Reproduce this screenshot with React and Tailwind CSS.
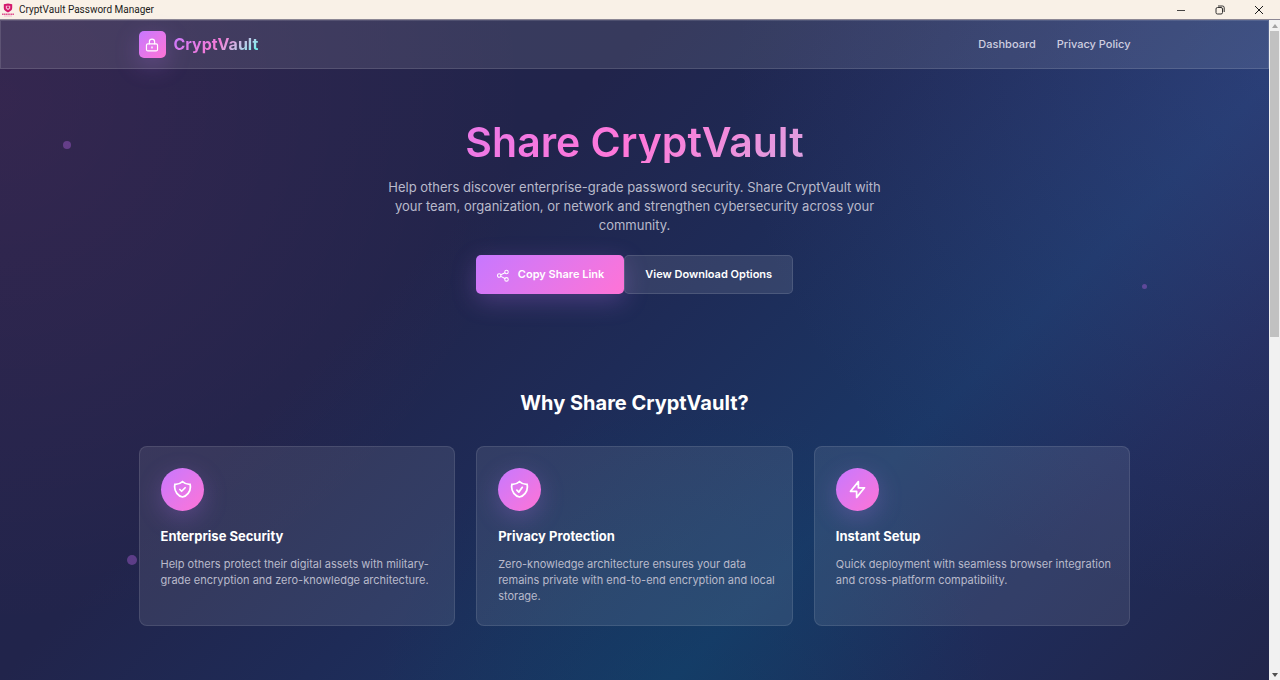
import React from "react";

const GLOW = "shadow-[0_7px_24px_rgba(199,119,255,0.25)]";

function Icon({ className, strokeWidth = 2, children }) {
  return (
    <svg
      viewBox="0 0 24 24"
      fill="none"
      stroke="currentColor"
      strokeWidth={strokeWidth}
      strokeLinecap="round"
      strokeLinejoin="round"
      className={className}
      aria-hidden="true"
    >
      {children}
    </svg>
  );
}

function LockIcon() {
  return (
    <Icon className="size-[14px]" strokeWidth={2}>
      <rect x="2.500" y="10" width="19" height="12" rx="2.5" />
      <path d="M7.5 10V6.500a4.5 4.5 0 0 1 9 0V10" />
      <path d="M12 15.5v1.500" strokeWidth={2.4} />
    </Icon>
  );
}

function ShareIcon() {
  return (
    <Icon className="size-[14px]" strokeWidth={1.8}>
      <circle cx="5.5" cy="13" r="3" />
      <circle cx="18" cy="7" r="3" />
      <circle cx="18" cy="19.500" r="3" />
      <path d="M8.3 11.7l7-3.4M8.3 14.4l7 3.7" />
    </Icon>
  );
}

function ShieldIcon({ check }) {
  return (
    <Icon className="size-[21px]">
      <path d="M12 2.9A12 12 0 0 1 3.4 6 12 12 0 0 0 3 9c0 5.6 3.8 10.3 9 11.6 5.2-1.3 9-6 9-11.6 0-1-.1-2-.4-3A12 12 0 0 1 12 2.9Z" />
      <path d={check} />
    </Icon>
  );
}

function BoltIcon() {
  return (
    <Icon className="size-[21px]">
      <path d="M13 10V3L4 14h7v7l9-11h-7z" />
    </Icon>
  );
}

const FEATURES = [
  {
    title: "Enterprise Security",
    text: "Help others protect their digital assets with military-grade encryption and zero-knowledge architecture.",
    icon: <ShieldIcon check="M9 12l2 2 4-4" />,
  },
  {
    title: "Privacy Protection",
    text: "Zero-knowledge architecture ensures your data remains private with end-to-end encryption and local storage.",
    icon: <ShieldIcon check="M9 12.7l2.2 2.300 4-5.500" />,
  },
  {
    title: "Instant Setup",
    text: "Quick deployment with seamless browser integration and cross-platform compatibility.",
    icon: <BoltIcon />,
  },
];

function TitleBar() {
  return (
    <div className="flex h-5 items-center justify-between border-b border-[#8c8794] bg-[#f9f1e7] text-[#1b1b1b]">
      <div className="flex items-center gap-1 pl-px">
        <svg viewBox="0 0 14 14" className="size-[14px]" aria-hidden="true">
          <path d="M2.8 1.200 7 .4l4.200.8v3.800c0 2-1.700 3.300-4.200 4.400-2.500-1.100-4.200-2.400-4.200-4.400z" fill="#d3176b" />
          <path d="M4.800 2.800h4.400v2.600L7 7.200 4.800 5.400z" fill="#f3b5ce" />
          <path d="M6 3.600h2v1.700H6z" fill="#d3176b" />
          <path d="M1 11.200h12" stroke="#e0508f" strokeWidth="1.600" strokeDasharray="1.400 0.400" />
          <path d="M3 13h8" stroke="#f0b4cc" strokeWidth="0.800" />
        </svg>
        <span className="font-[Roboto,sans-serif] text-[10px] leading-4">CryptVault Password Manager</span>
      </div>
      <div className="flex items-center pr-0.5">
        <button type="button" aria-label="Minimize" className="flex w-[39px] justify-center">
          <svg viewBox="0 0 10 10" className="size-[10px]" fill="none" stroke="currentColor" strokeWidth="0.800">
            <path d="M1 5.500h8" />
          </svg>
        </button>
        <button type="button" aria-label="Restore" className="flex w-[39px] justify-center">
          <svg viewBox="0 0 10 10" className="size-[10px]" fill="none" stroke="currentColor" strokeWidth="0.900">
            <rect x="1" y="2.500" width="6.500" height="6.500" rx="1.500" />
            <path d="M3 1h4.500A1.700 1.700 0 0 1 9.200 2.700V7" />
          </svg>
        </button>
        <button type="button" aria-label="Close" className="flex w-[39px] justify-center">
          <svg viewBox="0 0 10 10" className="size-[10px]" fill="none" stroke="currentColor">
            <path d="M1 1l8 8M9 1L1 9" />
          </svg>
        </button>
      </div>
    </div>
  );
}

function Header() {
  return (
    <header className="border border-white/12 bg-white/10">
      <div className="mx-auto flex max-w-[992px] items-center justify-between py-[10px]">
        <a href="#home" className="flex items-center gap-2">
          <span
            className={`flex size-[27px] items-center justify-center rounded-[5px] bg-linear-135 from-[#c777ff] to-[#ff73d6] text-white ${GLOW}`}
          >
            <LockIcon />
          </span>
          <span className="bg-linear-135 from-[#c777ff] via-[#f57ad8] via-50% to-[#72f0ee] to-90% bg-clip-text pb-0.5 text-base leading-6 font-bold text-transparent">
            CryptVault
          </span>
        </a>
        <nav className="flex gap-[21px] text-[11px] font-medium text-[#cfcfe0]">
          <a href="#dashboard">Dashboard</a>
          <a href="#privacy">Privacy Policy</a>
        </nav>
      </div>
    </header>
  );
}

function Scrollbar() {
  return (
    <div className="flex w-[11px] shrink-0 flex-col items-center bg-[#f1f1f1]" aria-hidden="true">
      <div className="flex h-[11px] items-center">
        <svg viewBox="0 0 6 4" className="h-1 w-1.5"><path d="M3 0l3 4H0z" fill="#a3a3a3" /></svg>
      </div>
      <div className="w-full flex-1 px-px">
        <div className="h-[48%] bg-[#c1c1c1]" />
      </div>
      <div className="flex h-[11px] items-center">
        <svg viewBox="0 0 6 4" className="h-1 w-1.5"><path d="M3 4l3-4H0z" fill="#505050" /></svg>
      </div>
    </div>
  );
}

export default function App() {
  return (
    <div className="flex min-h-screen flex-col font-[Inter,sans-serif]">
      <TitleBar />
      <div className="flex flex-1">
        <div className="relative flex-1 bg-[radial-gradient(circle_at_0%_12%,rgba(255,70,130,0.08),transparent_38%),radial-gradient(circle_at_100%_8%,rgba(100,90,180,0.22),transparent_38%),radial-gradient(circle_at_54%_104%,rgba(5,75,105,0.32),transparent_32%),linear-gradient(135deg,#24244b_0%,#21244b_34%,#1e2b57_50%,#1a3766_69%,#1f2c5a_82%,#21254a_100%)]">
          <span className="absolute top-[18.4%] left-[5%] size-2 rounded-full bg-[#a45ed0]/45" />
          <span className="absolute top-[40%] left-[90%] size-[5px] rounded-full bg-[#a45ed0]/45" />
          <span className="absolute top-[81%] left-[10%] size-[10px] rounded-full bg-[#a45ed0]/45" />
          <Header />
          <main className="relative mx-auto max-w-[992px]">
            <section className="flex flex-col items-center pt-[53px] text-center">
              <h1 className="w-full bg-linear-135 from-[#c777ff] via-[#ff77d9] to-[#78d8ea] bg-clip-text text-[41px] leading-[41px] font-semibold text-transparent">
                Share CryptVault
              </h1>
              <p className="mt-[15px] max-w-[512px] text-[13px] leading-[19px] text-[#b9bacb]">
                Help others discover enterprise-grade password security. Share CryptVault with your team, organization,
                or network and strengthen cybersecurity across your community.
              </p>
              <div className="mt-[20px] flex h-[39px] text-[11px] font-semibold text-white">
                <button
                  type="button"
                  className={`flex items-center gap-2 rounded-[5px] bg-linear-135 from-[#c777ff] to-[#ff73d6] px-5 ${GLOW}`}
                >
                  <ShareIcon />
                  Copy Share Link
                </button>
                <button type="button" className="rounded-[5px] border border-white/12 bg-white/10 px-5">
                  View Download Options
                </button>
              </div>
            </section>
            <section className="pt-[95px] pb-[54px]">
              <h2 className="text-center text-[20px] leading-7 font-bold text-white">Why Share CryptVault?</h2>
              <div className="mt-[29px] grid grid-cols-3 gap-[21px]">
                {FEATURES.map((f) => (
                  <article key={f.title} className="rounded-lg border border-white/10 bg-white/9 py-[21px] pr-3 pl-[21px]">
                    <div
                      className={`flex size-[43px] items-center justify-center rounded-full bg-linear-135 from-[#c777ff] to-[#ff73d6] text-white ${GLOW}`}
                    >
                      {f.icon}
                    </div>
                    <h3 className="mt-[15px] text-[13px] leading-5 font-bold text-white">{f.title}</h3>
                    <p className="mt-[10px] text-[11px] leading-4 text-[#b9bacb]">{f.text}</p>
                  </article>
                ))}
              </div>
            </section>
          </main>
        </div>
        <Scrollbar />
      </div>
    </div>
  );
}
